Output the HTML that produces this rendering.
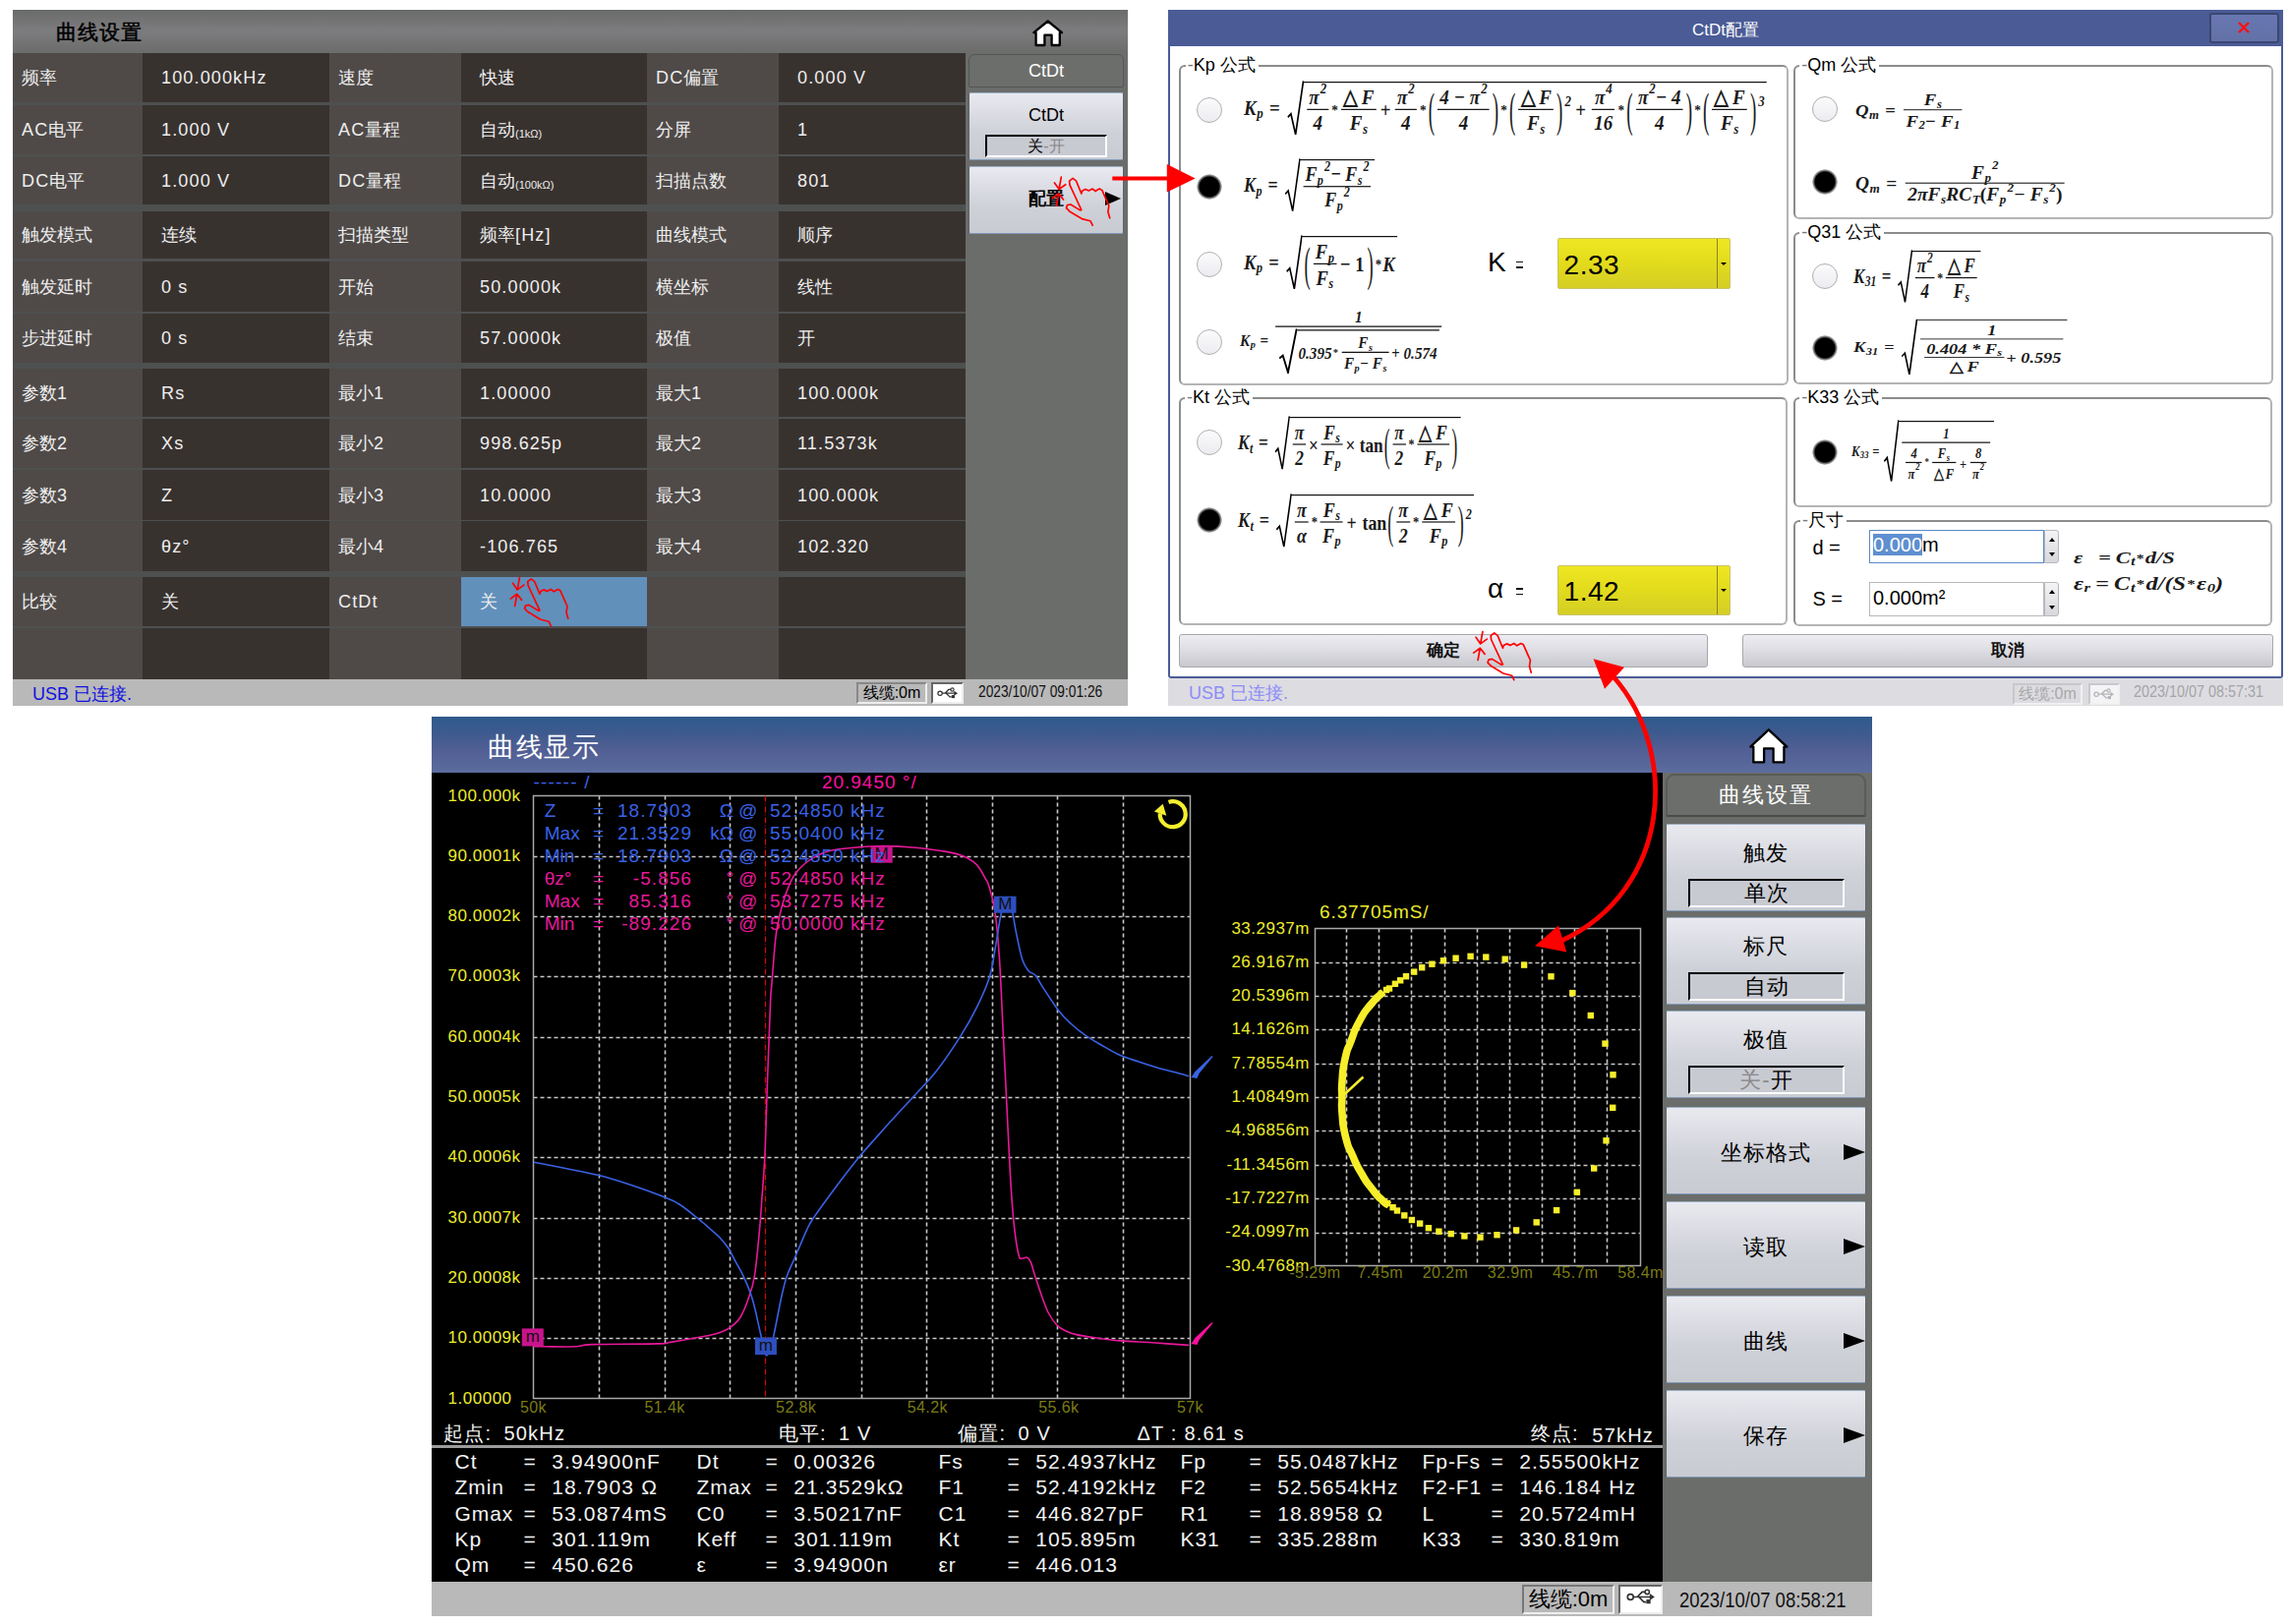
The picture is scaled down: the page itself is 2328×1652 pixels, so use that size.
<!DOCTYPE html>
<html><head><meta charset="utf-8">
<style>
*{margin:0;padding:0;box-sizing:border-box}
html,body{width:2328px;height:1652px;background:#fff;overflow:hidden;font-family:"Liberation Sans",sans-serif}
.abs{position:absolute;white-space:nowrap}
/* Panel A */
#pa{position:absolute;left:13px;top:10px;width:1134px;height:708px;background:#4e5050;overflow:hidden}
#pa .hdr{position:absolute;left:0;top:0;width:1134px;height:44px;background:linear-gradient(#686a69 0%,#727273 20%,#7c7b7d 45%,#7a797b 60%,#6f706f 85%,#6b6d6b 100%)}
#pa .ttl{position:absolute;left:44px;top:9px;font-size:21px;color:#000;letter-spacing:1px;-webkit-text-stroke:0.5px #000}
#pa .lt{letter-spacing:1.15px}
#pa .cell{position:absolute;color:#eee;font-size:18px;line-height:20px;padding-left:9px;display:flex;align-items:center}
#pa .lb{background:#4f4a48}
#pa .vl{background:#38322f;padding-left:19px}
#pa .side{position:absolute;left:969px;top:44px;width:165px;height:637px;background:#6b6d6b}
#pa .stat{position:absolute;left:0;top:681px;width:1134px;height:27px;background:#b9b9b9}
.sbtn{position:absolute;border-radius:2px;background:linear-gradient(#e9e9f0 0%,#dcdde4 30%,#cfd1d8 60%,#c9cbd2 100%);border:1px solid #5e6466;border-top-color:#9ab0c4;border-bottom-color:#7e9ab8;color:#000;text-align:center}
.subbox{position:absolute;border:2px solid #000;border-right-color:#fff;border-bottom-color:#fff;background:#c8cad2;text-align:center}

/* Panel C */
#pc{position:absolute;left:439px;top:729px;width:1465px;height:915px;background:#000;overflow:hidden}
#pc .hdr{position:absolute;left:0;top:0;width:1465px;height:57px;background:linear-gradient(#2f5a8c 0%,#3e5a8e 30%,#525f94 60%,#5b6c9e 100%)}
#pc .side{position:absolute;left:1252px;top:57px;width:213px;height:823px;background:#6b6d6b}
#pc .stat{position:absolute;left:0;top:880px;width:1465px;height:35px;background:#b9b9b9}
.dj{font-family:"Liberation Sans",sans-serif;white-space:nowrap;position:absolute}

/* Panel B */
#pb{position:absolute;left:1188px;top:10px;width:1135px;height:708px;overflow:visible}
#pb .win{position:absolute;left:0;top:0;width:1134px;height:680px;background:#fff;border:2px solid #4a5b96;border-top:0;border-radius:0 0 3px 3px}
#pb .tb{position:absolute;left:0;top:0;width:1134px;height:37px;background:#4a5b96;border-radius:2px 2px 0 0}
#pb .stat{position:absolute;left:0;top:680px;width:1134px;height:28px;background:#dddce1}
.gb{position:absolute;border:2px solid #8c8c8c;border-right-color:#b4b4b4;border-bottom-color:#b4b4b4;border-radius:6px}
.gbt{position:absolute;background:#fff;font-size:18px;color:#000;padding:0 3px 0 2px;line-height:18px;white-space:nowrap}
.rad{position:absolute;width:26px;height:26px;border-radius:50%;border:1.5px solid #b0b0b0;background:linear-gradient(#fbfbfd,#ecebef)}
.radc{position:absolute;width:26px;height:26px;border-radius:50%;background:radial-gradient(circle,#000 0,#000 10px,#555 11px,#bbb 12.5px,#fff 13px)}
.dbtn{position:absolute;border:1px solid #a8a8ac;border-radius:3px;background:linear-gradient(#ececf2 0%,#e2e2e8 35%,#d4d4da 70%,#c8c9ce 100%);font-size:17px;text-align:center;font-weight:bold;color:#111}
.ycb{position:absolute;background:linear-gradient(#efe722 0%,#e2db1c 50%,#d4ce26 100%);border:1px solid #c9c36a;border-radius:2px}
.m{position:absolute;font-family:"Liberation Serif",serif;font-weight:bold;font-style:italic;color:#1a1a1a;white-space:nowrap;display:flex;align-items:center;transform-origin:0 0;line-height:1}
.m .u{font-style:normal}
.fr{display:inline-flex;flex-direction:column;align-items:center;margin:0 2px}
.fr>.n{padding:0 2px 1px 2px;line-height:1;display:flex;align-items:center;justify-content:center}
.fr>.d{border-top:1.5px solid #111;padding:2px 2px 0 2px;line-height:1;align-self:stretch;display:flex;align-items:center;justify-content:center}
.sq{display:inline-flex;align-items:center;border-top:1.6px solid #111;position:relative;margin-left:16px;padding:3px 2px 0 2px}
.sq>svg{position:absolute;left:-15px;top:-2px;width:16px;height:calc(100% + 4px)}
.row{display:inline-flex;align-items:center}
.sb{font-size:0.68em;position:relative;top:0.4em;margin-left:0.5px}
.sp{font-size:0.68em;position:relative;top:-0.6em;margin-left:1px}
.pa{font-style:normal;font-weight:normal;transform:scaleY(2.2);display:inline-block;margin:0 1px}
</style></head>
<body>
<div id="pa">
  <div class="hdr"></div>
  <div class="ttl">曲线设置</div>
  <!-- home icon -->
  <svg class="abs" style="left:1036px;top:9px" width="34" height="30" viewBox="1049 19 34 30"><path d="M1065.7 21.5 L1080 33.2 L1077.8 33.2 L1077.8 46 L1069.6 46 L1069.6 35.7 L1062.4 35.7 L1062.4 46 L1053.6 46 L1053.6 33.2 L1051.4 33.2 Z" fill="#fff" stroke="#000" stroke-width="2.3" stroke-linejoin="round"/></svg>
  <!--PA_GRID-->
<div class="cell lb" style="left:0px;top:44px;width:132px;height:50px">频率</div>
<div class="cell vl" style="left:132px;top:44px;width:190px;height:50px"><span class="lt">100.000kHz</span></div>
<div class="cell lb" style="left:322px;top:44px;width:134px;height:50px">速度</div>
<div class="cell vl" style="left:456px;top:44px;width:189px;height:50px">快速</div>
<div class="cell lb" style="left:645px;top:44px;width:134px;height:50px"><span class="lt">DC</span>偏置</div>
<div class="cell vl" style="left:779px;top:44px;width:190px;height:50px"><span class="lt">0.000 V</span></div>
<div class="cell lb" style="left:0px;top:97px;width:132px;height:50px"><span class="lt">AC</span>电平</div>
<div class="cell vl" style="left:132px;top:97px;width:190px;height:50px"><span class="lt">1.000 V</span></div>
<div class="cell lb" style="left:322px;top:97px;width:134px;height:50px"><span class="lt">AC</span>量程</div>
<div class="cell vl" style="left:456px;top:97px;width:189px;height:50px">自动<span style="font-size:11px;position:relative;top:4px;letter-spacing:0">(1kΩ)</span></div>
<div class="cell lb" style="left:645px;top:97px;width:134px;height:50px">分屏</div>
<div class="cell vl" style="left:779px;top:97px;width:190px;height:50px"><span class="lt">1</span></div>
<div class="cell lb" style="left:0px;top:149px;width:132px;height:49px"><span class="lt">DC</span>电平</div>
<div class="cell vl" style="left:132px;top:149px;width:190px;height:49px"><span class="lt">1.000 V</span></div>
<div class="cell lb" style="left:322px;top:149px;width:134px;height:49px"><span class="lt">DC</span>量程</div>
<div class="cell vl" style="left:456px;top:149px;width:189px;height:49px">自动<span style="font-size:11px;position:relative;top:4px;letter-spacing:0">(100kΩ)</span></div>
<div class="cell lb" style="left:645px;top:149px;width:134px;height:49px">扫描点数</div>
<div class="cell vl" style="left:779px;top:149px;width:190px;height:49px"><span class="lt">801</span></div>
<div class="cell lb" style="left:0px;top:205px;width:132px;height:48px">触发模式</div>
<div class="cell vl" style="left:132px;top:205px;width:190px;height:48px">连续</div>
<div class="cell lb" style="left:322px;top:205px;width:134px;height:48px">扫描类型</div>
<div class="cell vl" style="left:456px;top:205px;width:189px;height:48px">频率<span class="lt">[Hz]</span></div>
<div class="cell lb" style="left:645px;top:205px;width:134px;height:48px">曲线模式</div>
<div class="cell vl" style="left:779px;top:205px;width:190px;height:48px">顺序</div>
<div class="cell lb" style="left:0px;top:256px;width:132px;height:51px">触发延时</div>
<div class="cell vl" style="left:132px;top:256px;width:190px;height:51px"><span class="lt">0 s</span></div>
<div class="cell lb" style="left:322px;top:256px;width:134px;height:51px">开始</div>
<div class="cell vl" style="left:456px;top:256px;width:189px;height:51px"><span class="lt">50.0000k</span></div>
<div class="cell lb" style="left:645px;top:256px;width:134px;height:51px">横坐标</div>
<div class="cell vl" style="left:779px;top:256px;width:190px;height:51px">线性</div>
<div class="cell lb" style="left:0px;top:309px;width:132px;height:50px">步进延时</div>
<div class="cell vl" style="left:132px;top:309px;width:190px;height:50px"><span class="lt">0 s</span></div>
<div class="cell lb" style="left:322px;top:309px;width:134px;height:50px">结束</div>
<div class="cell vl" style="left:456px;top:309px;width:189px;height:50px"><span class="lt">57.0000k</span></div>
<div class="cell lb" style="left:645px;top:309px;width:134px;height:50px">极值</div>
<div class="cell vl" style="left:779px;top:309px;width:190px;height:50px">开</div>
<div class="cell lb" style="left:0px;top:365px;width:132px;height:49px">参数<span class="lt">1</span></div>
<div class="cell vl" style="left:132px;top:365px;width:190px;height:49px"><span class="lt">Rs</span></div>
<div class="cell lb" style="left:322px;top:365px;width:134px;height:49px">最小<span class="lt">1</span></div>
<div class="cell vl" style="left:456px;top:365px;width:189px;height:49px"><span class="lt">1.00000</span></div>
<div class="cell lb" style="left:645px;top:365px;width:134px;height:49px">最大<span class="lt">1</span></div>
<div class="cell vl" style="left:779px;top:365px;width:190px;height:49px"><span class="lt">100.000k</span></div>
<div class="cell lb" style="left:0px;top:416px;width:132px;height:50px">参数<span class="lt">2</span></div>
<div class="cell vl" style="left:132px;top:416px;width:190px;height:50px"><span class="lt">Xs</span></div>
<div class="cell lb" style="left:322px;top:416px;width:134px;height:50px">最小<span class="lt">2</span></div>
<div class="cell vl" style="left:456px;top:416px;width:189px;height:50px"><span class="lt">998.625p</span></div>
<div class="cell lb" style="left:645px;top:416px;width:134px;height:50px">最大<span class="lt">2</span></div>
<div class="cell vl" style="left:779px;top:416px;width:190px;height:50px"><span class="lt">11.5373k</span></div>
<div class="cell lb" style="left:0px;top:468px;width:132px;height:51px">参数<span class="lt">3</span></div>
<div class="cell vl" style="left:132px;top:468px;width:190px;height:51px"><span class="lt">Z</span></div>
<div class="cell lb" style="left:322px;top:468px;width:134px;height:51px">最小<span class="lt">3</span></div>
<div class="cell vl" style="left:456px;top:468px;width:189px;height:51px"><span class="lt">10.0000</span></div>
<div class="cell lb" style="left:645px;top:468px;width:134px;height:51px">最大<span class="lt">3</span></div>
<div class="cell vl" style="left:779px;top:468px;width:190px;height:51px"><span class="lt">100.000k</span></div>
<div class="cell lb" style="left:0px;top:520px;width:132px;height:51px">参数<span class="lt">4</span></div>
<div class="cell vl" style="left:132px;top:520px;width:190px;height:51px"><span class="lt">θz°</span></div>
<div class="cell lb" style="left:322px;top:520px;width:134px;height:51px">最小<span class="lt">4</span></div>
<div class="cell vl" style="left:456px;top:520px;width:189px;height:51px"><span class="lt">-106.765</span></div>
<div class="cell lb" style="left:645px;top:520px;width:134px;height:51px">最大<span class="lt">4</span></div>
<div class="cell vl" style="left:779px;top:520px;width:190px;height:51px"><span class="lt">102.320</span></div>
<div class="cell lb" style="left:0px;top:577px;width:132px;height:50px">比较</div>
<div class="cell vl" style="left:132px;top:577px;width:190px;height:50px">关</div>
<div class="cell lb" style="left:322px;top:577px;width:134px;height:50px"><span class="lt">CtDt</span></div>
<div class="cell vl" style="left:456px;top:577px;width:189px;height:50px;background:#6190bb">关</div>
<div class="cell lb" style="left:645px;top:577px;width:134px;height:50px"></div>
<div class="cell vl" style="left:779px;top:577px;width:190px;height:50px"></div>
<div class="cell lb" style="left:0px;top:629px;width:132px;height:52px"></div>
<div class="cell vl" style="left:132px;top:629px;width:190px;height:52px"></div>
<div class="cell lb" style="left:322px;top:629px;width:134px;height:52px"></div>
<div class="cell vl" style="left:456px;top:629px;width:189px;height:52px"></div>
<div class="cell lb" style="left:645px;top:629px;width:134px;height:52px"></div>
<div class="cell vl" style="left:779px;top:629px;width:190px;height:52px"></div>
<!--/PA_GRID-->
  <div class="side">
    <div class="abs" style="left:3px;top:1px;width:158px;height:34px;background:#6c6e6b;border:1px solid #555;border-radius:6px 6px 2px 2px;color:#fff;font-size:18px;text-align:center;line-height:32px">CtDt</div>
    <div class="sbtn" style="left:3px;top:40px;width:158px;height:69px"><div style="font-size:18px;margin-top:12px">CtDt</div>
      <div class="subbox" style="left:16px;top:42px;width:124px;height:23px;font-size:16px;line-height:19px"><span style="color:#000">关</span><span style="color:#888">-开</span></div></div>
    <div class="sbtn" style="left:3px;top:115px;width:158px;height:69px"><div style="font-size:18px;margin-top:20px;font-weight:bold">配置</div>
      <div class="abs" style="left:138px;top:25px;width:0;height:0;border-left:16px solid #000;border-top:7px solid transparent;border-bottom:7px solid transparent"></div></div>
  </div>
  <div class="stat">
    <div class="abs" style="left:20px;top:3px;color:#1010e0;font-size:18px">USB 已连接.</div>
    <div class="abs" style="left:858px;top:3px;width:72px;height:22px;border:2px solid #888;border-right-color:#eee;border-bottom-color:#eee;font-size:16px;line-height:18px;text-align:center;color:#000">线缆:0m</div>
    <div class="abs" style="left:934px;top:3px;width:33px;height:22px;border:2px solid #666;border-right-color:#eee;border-bottom-color:#eee;background:#fff"></div><svg class="abs" style="left:940px;top:8px" width="22.3" height="12.4" viewBox="0 0 36 20"><g stroke="#333" fill="none" stroke-width="2"><circle cx="5" cy="10" r="3.5"/><path d="M8.5 10H29M13 10L19 4H23M15 10L21 16H24"/></g><path d="M28 6L34 10L28 14Z" fill="#333"/><circle cx="25" cy="4" r="2.6" fill="none" stroke="#333" stroke-width="1.8"/><rect x="24" y="13" width="5" height="5" fill="#333"/></svg>
    <div class="abs" style="left:982px;top:4px;font-size:16px;color:#111;transform:scaleX(0.86);transform-origin:left top">2023/10/07 09:01:26</div>
  </div>
</div>


<div id="pb">
  <div class="win"></div>
  <div class="tb"></div>
  <div class="abs" style="left:0;top:9px;width:1134px;text-align:center;color:#fff;font-size:17px">CtDt配置</div>
  <div class="abs" style="left:1059px;top:3px;width:71px;height:31px;background:linear-gradient(#6877b2,#6271a6);border:2px solid #3a4770;border-radius:3px"></div>
  <svg class="abs" style="left:1087px;top:11px" width="14" height="14" viewBox="0 0 14 14"><path d="M2 2L12 12M12 2L2 12" stroke="#ff1010" stroke-width="2.4"/></svg>
  <!--PB_BODY-->
<div class="gb" style="left:11.0px;top:56.0px;width:620.0px;height:326.0px"></div>
<div class="gbt" style="left:17.7px;top:47.0px"><span style="color:#777">-</span>Kp 公式</div>
<div class="gb" style="left:636.0px;top:56.0px;width:488.0px;height:157.0px"></div>
<div class="gbt" style="left:642.2px;top:47.0px"><span style="color:#777">-</span>Qm 公式</div>
<div class="gb" style="left:636.0px;top:225.5px;width:488.0px;height:155.5px"></div>
<div class="gbt" style="left:642.2px;top:216.5px"><span style="color:#777">-</span>Q31 公式</div>
<div class="gb" style="left:11.0px;top:394.0px;width:619.0px;height:232.0px"></div>
<div class="gbt" style="left:17.1px;top:385.0px"><span style="color:#777">-</span>Kt 公式</div>
<div class="gb" style="left:636.0px;top:394.0px;width:487.0px;height:112.0px"></div>
<div class="gbt" style="left:642.3px;top:385.0px"><span style="color:#777">-</span>K33 公式</div>
<div class="gb" style="left:636.0px;top:519.0px;width:487.0px;height:108.0px"></div>
<div class="gbt" style="left:643.0px;top:510.0px"><span style="color:#777">-</span>尺寸</div>
<div class="rad" style="left:29.0px;top:88.6px"></div>
<div class="radc" style="left:29.0px;top:167.2px"></div>
<div class="rad" style="left:29.0px;top:245.7px"></div>
<div class="rad" style="left:29.0px;top:325.0px"></div>
<div class="rad" style="left:654.9px;top:88.3px"></div>
<div class="radc" style="left:654.9px;top:161.7px"></div>
<div class="rad" style="left:654.9px;top:257.8px"></div>
<div class="radc" style="left:654.9px;top:331.0px"></div>
<div class="rad" style="left:29.0px;top:426.9px"></div>
<div class="radc" style="left:29.0px;top:506.0px"></div>
<div class="radc" style="left:654.9px;top:437.2px"></div>
<div class="dbtn" style="left:10.5px;top:635.4px;width:538.5px;height:34px;line-height:32px">确定</div>
<div class="dbtn" style="left:584px;top:635.4px;width:539.5px;height:34px;line-height:32px">取消</div>
<div class="ycb" style="left:395.5999999999999px;top:232.4px;width:176.4px;height:51.5px"><div class="abs" style="left:6px;top:10.7px;font-size:28px;color:#000;letter-spacing:0.5px">2.33</div><div class="abs" style="left:161px;top:0;width:1px;height:100%;background:#8a8420"></div><div class="abs" style="left:165px;top:23.7px;width:0;height:0;border-top:3px solid #000;border-left:3px solid transparent;border-right:3px solid transparent"></div></div>
<div class="abs" style="left:325px;top:241.1px;font-size:28px;color:#000">K</div><div class="abs" style="left:353.5999999999999px;top:255.6px;width:7px;height:1.8px;background:#111"></div><div class="abs" style="left:353.5999999999999px;top:261.3px;width:7px;height:1.8px;background:#111"></div>
<div class="ycb" style="left:395.5999999999999px;top:564.5px;width:176.4px;height:51.5px"><div class="abs" style="left:6px;top:10.8px;font-size:28px;color:#000;letter-spacing:0.5px">1.42</div><div class="abs" style="left:161px;top:0;width:1px;height:100%;background:#8a8420"></div><div class="abs" style="left:165px;top:23.8px;width:0;height:0;border-top:3px solid #000;border-left:3px solid transparent;border-right:3px solid transparent"></div></div>
<div class="abs" style="left:325px;top:573.2px;font-size:28px;color:#000">α</div><div class="abs" style="left:353.5999999999999px;top:587.8px;width:7px;height:1.8px;background:#111"></div><div class="abs" style="left:353.5999999999999px;top:593.5px;width:7px;height:1.8px;background:#111"></div>
<div class="abs" style="left:655.4000000000001px;top:536px;font-size:20px;color:#000">d =</div>
<div class="abs" style="left:655.4000000000001px;top:588px;font-size:20px;color:#000">S =</div>
<div class="abs" style="left:713px;top:529.2px;width:178px;height:33.5px;border:1.5px solid #5a8ac8;background:#fff;font-size:20px;line-height:29.5px;padding-left:3px;color:#000"><span style="background:#5f8fcf;color:#fff">0.000</span>m</div>
<div class="abs" style="left:891px;top:529.2px;width:15px;height:33.5px;border:1px solid #b8b8bc;border-radius:0 3px 3px 0;background:linear-gradient(#f4f4f6,#d8d8dc)"><div class="abs" style="left:3.5px;top:7px;border-bottom:4px solid #000;border-left:3.5px solid transparent;border-right:3.5px solid transparent"></div><div class="abs" style="left:3.5px;top:21.5px;border-top:4px solid #000;border-left:3.5px solid transparent;border-right:3.5px solid transparent"></div></div>
<div class="abs" style="left:713px;top:581.9px;width:178px;height:34.7px;border:1.5px solid #b8b8bc;background:#fff;font-size:20px;line-height:30.7px;padding-left:3px;color:#000">0.000m²</div>
<div class="abs" style="left:891px;top:581.9px;width:15px;height:34.7px;border:1px solid #b8b8bc;border-radius:0 3px 3px 0;background:linear-gradient(#f4f4f6,#d8d8dc)"><div class="abs" style="left:3.5px;top:7px;border-bottom:4px solid #000;border-left:3.5px solid transparent;border-right:3.5px solid transparent"></div><div class="abs" style="left:3.5px;top:22.7px;border-top:4px solid #000;border-left:3.5px solid transparent;border-right:3.5px solid transparent"></div></div>
<!--FORMULAS-->
<div class="m" id="f_kp1" style="left:77.30px;top:73.07px;font-size:18px;transform:scale(1.0530,1.2066)">K<span class="sb">p</span><span class="u" style="margin:0 6px">=</span><span class="sq"><svg viewBox="0 0 16 100" preserveAspectRatio="none"><path d="M0.5 66 L3.5 60 L8 97 L15.5 1" stroke="#000" stroke-width="1.6" fill="none" vector-effect="non-scaling-stroke"/></svg><span class="fr "><span class="n">π<span class="sp">2</span></span><span class="d">4</span></span><span class="u" style="margin:0 1px;font-size:0.7em">*</span><span class="fr "><span class="n"><span class="u">△</span>&thinsp;F</span><span class="d">F<span class="sb">s</span></span></span><span class="u" style="margin:0 2px">+</span><span class="fr "><span class="n">π<span class="sp">2</span></span><span class="d">4</span></span><span class="u" style="margin:0 1px;font-size:0.7em">*</span><span class="pa" style="transform:scaleY(2.2)">(</span><span class="fr "><span class="n">4 − π<span class="sp">2</span></span><span class="d">4</span></span><span class="pa" style="transform:scaleY(2.2)">)</span><span class="u" style="margin:0 1px;font-size:0.7em">*</span><span class="pa" style="transform:scaleY(2.2)">(</span><span class="fr "><span class="n"><span class="u">△</span>&thinsp;F</span><span class="d">F<span class="sb">s</span></span></span><span class="pa" style="transform:scaleY(2.2)">)</span><span class="sp">2</span><span class="u" style="margin:0 4px">+</span><span class="fr "><span class="n">π<span class="sp">4</span></span><span class="d">16</span></span><span class="u" style="margin:0 1px;font-size:0.7em">*</span><span class="pa" style="transform:scaleY(2.2)">(</span><span class="fr "><span class="n">π<span class="sp">2</span> − 4</span><span class="d">4</span></span><span class="pa" style="transform:scaleY(2.2)">)</span><span class="u" style="margin:0 1px;font-size:0.7em">*</span><span class="pa" style="transform:scaleY(2.2)">(</span><span class="fr "><span class="n"><span class="u">△</span>&thinsp;F</span><span class="d">F<span class="sb">s</span></span></span><span class="pa" style="transform:scaleY(2.2)">)</span><span class="sp">3</span></span></div>
<div class="m" id="f_kp2" style="left:77.30px;top:151.53px;font-size:18px;transform:scale(0.9927,1.1797)">K<span class="sb">p</span><span class="u" style="margin:0 6px">=</span><span class="sq"><svg viewBox="0 0 16 100" preserveAspectRatio="none"><path d="M0.5 66 L3.5 60 L8 97 L15.5 1" stroke="#000" stroke-width="1.6" fill="none" vector-effect="non-scaling-stroke"/></svg><span class="fr "><span class="n">F<span class="sb">p</span><span class="sp">2</span> − F<span class="sb">s</span><span class="sp">2</span></span><span class="d">F<span class="sb">p</span><span class="sp">2</span></span></span></span></div>
<div class="m" id="f_kp3" style="left:77.30px;top:230.11px;font-size:18px;transform:scale(1.0269,1.2080)">K<span class="sb">p</span><span class="u" style="margin:0 6px">=</span><span class="sq"><svg viewBox="0 0 16 100" preserveAspectRatio="none"><path d="M0.5 66 L3.5 60 L8 97 L15.5 1" stroke="#000" stroke-width="1.6" fill="none" vector-effect="non-scaling-stroke"/></svg><span class="pa" style="transform:scaleY(2.2)">(</span><span class="fr "><span class="n">F<span class="sb">p</span></span><span class="d">F<span class="sb">s</span></span></span><span class="u" style="margin:0 2px">− 1</span><span class="pa" style="transform:scaleY(2.2)">)</span><span class="u" style="margin:0 1px;font-size:0.7em">*</span>K</span></div>
<div class="m" id="f_kp4" style="left:73.30px;top:304.25px;font-size:13px;transform:scale(1.1660,1.2500)">K<span class="sb">p</span><span class="u" style="margin:0 4px">=</span><span class="fr big"><span class="n">1</span><span class="d"><span class="sq"><svg viewBox="0 0 16 100" preserveAspectRatio="none"><path d="M0.5 66 L3.5 60 L8 97 L15.5 1" stroke="#000" stroke-width="1.6" fill="none" vector-effect="non-scaling-stroke"/></svg>0.395<span class="u" style="margin:0 1px;font-size:0.7em">*</span><span class="fr "><span class="n">F<span class="sb">s</span></span><span class="d">F<span class="sb">p</span> − F<span class="sb">s</span></span></span> + 0.574</span></span></span></div>
<div class="m" id="f_qm1" style="left:699.10px;top:82.96px;font-size:18px;transform:scale(1.0425,0.9597)">Q<span class="sb">m</span><span class="u" style="margin:0 6px">=</span><span class="fr "><span class="n">F<span class="sb">s</span></span><span class="d">F<span class="sb">2</span> − F<span class="sb">1</span></span></span></div>
<div class="m" id="f_qm2" style="left:699.10px;top:155.67px;font-size:18px;transform:scale(1.0793,1.0366)">Q<span class="sb">m</span><span class="u" style="margin:0 6px">=</span><span class="fr "><span class="n">F<span class="sb">p</span><span class="sp">2</span></span><span class="d">2πF<span class="sb">s</span>RC<span class="sb">T</span><span class="u">(</span>F<span class="sb">p</span><span class="sp">2</span> − F<span class="sb">s</span><span class="sp">2</span><span class="u">)</span></span></span></div>
<div class="m" id="f_k31a" style="left:696.70px;top:245.42px;font-size:18px;transform:scale(0.9378,1.1734)">K<span class="sb">31</span><span class="u" style="margin:0 6px">=</span><span class="sq"><svg viewBox="0 0 16 100" preserveAspectRatio="none"><path d="M0.5 66 L3.5 60 L8 97 L15.5 1" stroke="#000" stroke-width="1.6" fill="none" vector-effect="non-scaling-stroke"/></svg><span class="fr "><span class="n">π<span class="sp">2</span></span><span class="d">4</span></span><span class="u" style="margin:0 1px;font-size:0.7em">*</span><span class="fr "><span class="n"><span class="u">△</span>&thinsp;F</span><span class="d">F<span class="sb">s</span></span></span></span></div>
<div class="m" id="f_k31b" style="left:696.70px;top:315.45px;font-size:18px;transform:scale(1.0161,0.8464)">K<span class="sb">31</span><span class="u" style="margin:0 6px">=</span><span class="sq"><svg viewBox="0 0 16 100" preserveAspectRatio="none"><path d="M0.5 66 L3.5 60 L8 97 L15.5 1" stroke="#000" stroke-width="1.6" fill="none" vector-effect="non-scaling-stroke"/></svg><span class="fr "><span class="n">1</span><span class="d"><span class="fr "><span class="n">0.404 * F<span class="sb">s</span></span><span class="d"><span class="u">△</span>&thinsp;F</span></span> + 0.595</span></span></span></div>
<div class="m" id="f_kt1" style="left:70.50px;top:414.49px;font-size:18px;transform:scale(0.9604,1.1912)">K<span class="sb">t</span><span class="u" style="margin:0 6px">=</span><span class="sq"><svg viewBox="0 0 16 100" preserveAspectRatio="none"><path d="M0.5 66 L3.5 60 L8 97 L15.5 1" stroke="#000" stroke-width="1.6" fill="none" vector-effect="non-scaling-stroke"/></svg><span class="fr "><span class="n">π</span><span class="d">2</span></span><span class="u" style="margin:0 1px">×</span><span class="fr "><span class="n">F<span class="sb">s</span></span><span class="d">F<span class="sb">p</span></span></span><span class="u" style="margin:0 1px">×</span><span class="u">&thinsp;tan</span><span class="pa" style="transform:scaleY(2.2)">(</span><span class="fr "><span class="n">π</span><span class="d">2</span></span><span class="u" style="margin:0 1px;font-size:0.7em">*</span><span class="fr "><span class="n"><span class="u">△</span>&thinsp;F</span><span class="d">F<span class="sb">p</span></span></span><span class="pa" style="transform:scaleY(2.2)">)</span></span></div>
<div class="m" id="f_kt2" style="left:70.50px;top:493.09px;font-size:18px;transform:scale(0.9957,1.1912)">K<span class="sb">t</span><span class="u" style="margin:0 6px">=</span><span class="sq"><svg viewBox="0 0 16 100" preserveAspectRatio="none"><path d="M0.5 66 L3.5 60 L8 97 L15.5 1" stroke="#000" stroke-width="1.6" fill="none" vector-effect="non-scaling-stroke"/></svg><span class="fr "><span class="n">π</span><span class="d">α</span></span><span class="u" style="margin:0 1px;font-size:0.7em">*</span><span class="fr "><span class="n">F<span class="sb">s</span></span><span class="d">F<span class="sb">p</span></span></span><span class="u" style="margin:0 2px">+</span><span class="u">&thinsp;tan</span><span class="pa" style="transform:scaleY(2.2)">(</span><span class="fr "><span class="n">π</span><span class="d">2</span></span><span class="u" style="margin:0 1px;font-size:0.7em">*</span><span class="fr "><span class="n"><span class="u">△</span>&thinsp;F</span><span class="d">F<span class="sb">p</span></span></span><span class="pa" style="transform:scaleY(2.2)">)</span><span class="sp">2</span></span></div>
<div class="m" id="f_k33" style="left:695.00px;top:417.90px;font-size:13px;transform:scale(0.9670,1.1963)">K<span class="sb">33</span><span class="u" style="margin:0 4px">=</span><span class="sq"><svg viewBox="0 0 16 100" preserveAspectRatio="none"><path d="M0.5 66 L3.5 60 L8 97 L15.5 1" stroke="#000" stroke-width="1.6" fill="none" vector-effect="non-scaling-stroke"/></svg><span class="fr "><span class="n">1</span><span class="d"><span class="fr "><span class="n">4</span><span class="d">π<span class="sp">2</span></span></span><span class="u" style="margin:0 1px;font-size:0.7em">*</span><span class="fr "><span class="n">F<span class="sb">s</span></span><span class="d"><span class="u">△</span>&thinsp;F</span></span><span class="u" style="margin:0 2px">+</span><span class="fr "><span class="n">8</span><span class="d">π<span class="sp">2</span></span></span></span></span></span></div>
<div class="m" id="f_eps1" style="left:921.20px;top:548.90px;font-size:19px;transform:scale(1.1827,0.9014)">ε&nbsp;&nbsp;<span class="u" style="margin:0 4px">=</span>C<span class="sb">t</span><span class="u" style="margin:0 1px;font-size:0.7em">*</span>d/S</div>
<div class="m" id="f_eps2" style="left:921.20px;top:573.99px;font-size:19px;transform:scale(1.2771,0.9915)">ε<span class="sb">r</span><span class="u" style="margin:0 4px">=</span>C<span class="sb">t</span><span class="u" style="margin:0 1px;font-size:0.7em">*</span>d/(S<span class="u" style="margin:0 1px;font-size:0.7em">*</span>ε<span class="sb">0</span>)</div>
<!--/FORMULAS-->
<!--/PB_BODY-->
  <div class="stat">
    <div class="abs" style="left:21px;top:3px;color:#8c8cf8;font-size:18px">USB 已连接.</div>
    <div class="abs" style="left:859px;top:5px;width:71px;height:22px;border:2px solid #c8c8cc;border-right-color:#f0f0f0;border-bottom-color:#f0f0f0;font-size:16px;line-height:18px;text-align:center;color:#a8a8a8">线缆:0m</div>
    <div class="abs" style="left:936px;top:5px;width:32px;height:22px;border:2px solid #c8c8cc;border-right-color:#f0f0f0;border-bottom-color:#f0f0f0;background:#f4f4f6"></div><svg class="abs" style="left:941px;top:10px" width="22.3" height="12.4" viewBox="0 0 36 20"><g stroke="#b4b4b8" fill="none" stroke-width="2"><circle cx="5" cy="10" r="3.5"/><path d="M8.5 10H29M13 10L19 4H23M15 10L21 16H24"/></g><path d="M28 6L34 10L28 14Z" fill="#b4b4b8"/><circle cx="25" cy="4" r="2.6" fill="none" stroke="#b4b4b8" stroke-width="1.8"/><rect x="24" y="13" width="5" height="5" fill="#b4b4b8"/></svg>
    <div class="abs" style="left:982px;top:5px;font-size:16px;color:#a4a4a8;transform:scaleX(0.9);transform-origin:left top">2023/10/07 08:57:31</div>
  </div>
</div>
<div id="pc">
  <div class="hdr"></div>
  <div class="abs" style="left:57px;top:13px;font-size:27px;color:#fff;letter-spacing:1.5px">曲线显示</div>
  <svg class="abs" style="left:1339px;top:11px" width="42" height="38" viewBox="1778 740 42 38"><path d="M1798.8 742.3 L1817.3 759.6 L1814.4 759.6 L1814.4 775.4 L1803.6 775.4 L1803.6 761.3 L1794.1 761.3 L1794.1 775.4 L1783.3 775.4 L1783.3 759.6 L1780.3 759.6 Z" fill="#fff" stroke="#000" stroke-width="2.3" stroke-linejoin="round"/></svg>
  <!--PC_CHART-->
<svg class="abs" style="left:0;top:0" width="1252" height="880" viewBox="0 0 1252 880">
<path d="M170.5 80.5V693.5 M103.5 142.5H771.5 M237.5 80.5V693.5 M103.5 203.5H771.5 M303.5 80.5V693.5 M103.5 264.5H771.5 M370.5 80.5V693.5 M103.5 326.5H771.5 M437.5 80.5V693.5 M103.5 387.5H771.5 M503.5 80.5V693.5 M103.5 448.5H771.5 M570.5 80.5V693.5 M103.5 510.5H771.5 M636.5 80.5V693.5 M103.5 571.5H771.5 M703.5 80.5V693.5 M103.5 632.5H771.5" stroke="#c8c8c8" stroke-width="1.6" stroke-dasharray="4 3" fill="none"/>
<rect x="103.5" y="80.5" width="668.0" height="613.0" fill="none" stroke="#a8a8a8" stroke-width="1.5"/>
<path d="M339.5 80.5V693.5" stroke="#e00000" stroke-width="1.2" stroke-dasharray="6 2 1 2" fill="none"/>
<path d="M103.5 640.5 C105.3 640.5 107.1 640.8 114.3 640.8 C121.5 640.8 138.7 641.2 146.8 640.8 C154.9 640.4 149.3 639.1 163.1 638.6 C176.9 638.1 216.2 638.3 229.5 637.9 C242.8 637.5 236.4 637.4 242.8 636.4 C249.2 635.4 260.6 633.4 268.0 632.0 C275.4 630.6 281.5 629.9 287.2 628.3 C292.9 626.7 297.6 625.1 302.0 622.3 C306.4 619.5 310.4 616.6 313.8 611.3 C317.2 606.0 320.2 597.7 322.6 590.6 C325.1 583.4 326.6 580.2 328.5 568.4 C330.4 556.6 332.5 532.8 333.7 519.7 C334.9 506.7 335.0 502.4 335.9 490.1 C336.8 477.8 338.1 462.7 338.9 445.8 C339.7 428.8 340.5 400.9 340.9 388.4 C341.3 375.9 340.9 387.4 341.5 371.0 C342.1 354.6 343.9 306.5 344.6 289.8 C345.4 273.1 345.2 281.4 346.0 271.0 C346.8 260.6 348.6 237.5 349.6 227.5 C350.6 217.5 350.9 217.2 352.1 211.0 C353.3 204.8 355.2 196.5 357.0 190.2 C358.8 183.9 360.9 178.0 363.0 173.0 C365.1 168.0 366.8 164.1 369.5 160.3 C372.2 156.5 375.7 152.9 379.0 150.0 C382.3 147.1 385.4 145.1 389.4 142.9 C393.4 140.7 398.0 138.4 403.0 137.0 C408.0 135.6 411.2 135.1 419.3 134.2 C427.4 133.3 440.1 131.9 451.7 131.7 C463.3 131.5 476.6 132.0 489.0 133.0 C501.4 134.0 517.7 136.4 526.4 137.9 C535.1 139.4 536.9 140.3 541.0 142.0 C545.1 143.7 548.6 145.9 551.3 147.9 C554.0 149.9 555.0 151.1 557.0 154.0 C559.0 156.9 562.0 162.5 563.5 165.3 C565.0 168.1 564.8 165.9 566.3 171.0 C567.8 176.1 570.6 183.3 572.5 195.6 C574.4 207.9 576.0 224.4 577.4 244.9 C578.8 265.4 579.9 294.1 581.1 318.7 C582.3 343.3 583.6 368.0 584.8 392.6 C586.0 417.2 587.3 446.0 588.5 466.5 C589.7 487.0 590.8 502.2 592.2 515.7 C593.6 529.2 595.6 541.9 597.1 547.8 C598.6 553.7 599.6 550.6 601.0 551.0 C602.4 551.4 604.3 549.5 605.7 550.2 C607.1 550.9 608.0 551.6 609.4 555.1 C610.8 558.5 612.4 565.1 614.3 570.9 C616.2 576.7 618.6 584.1 620.7 590.0 C622.8 595.9 624.5 601.2 627.0 606.0 C629.5 610.8 632.7 615.5 635.7 618.7 C638.7 621.9 641.7 623.4 645.0 625.0 C648.3 626.6 650.4 627.4 655.6 628.6 C660.8 629.8 668.5 630.9 676.0 632.0 C683.5 633.1 690.4 634.1 700.4 634.9 C710.4 635.7 724.4 636.2 736.0 637.0 C747.6 637.8 764.4 639.0 770.1 639.4" stroke="#e8189a" stroke-width="1.6" fill="none" stroke-linejoin="round"/>
<path d="M104.0 453.2 C109.3 454.3 125.0 457.3 136.0 459.5 C147.0 461.7 158.5 463.7 169.7 466.5 C180.9 469.3 191.9 472.8 203.0 476.5 C214.1 480.2 228.1 485.3 236.2 488.6 C244.3 491.8 246.2 492.6 251.7 496.0 C257.2 499.4 265.0 505.8 269.4 509.3 C273.8 512.8 275.7 514.5 278.3 516.7 C280.9 518.9 282.5 520.4 285.0 522.6 C287.5 524.8 290.3 526.9 293.1 530.0 C295.9 533.1 299.5 537.3 302.0 541.0 C304.5 544.7 305.4 547.6 307.9 552.2 C310.3 556.8 314.0 562.8 316.7 568.4 C319.4 574.1 322.1 580.3 324.1 586.1 C326.2 591.9 327.3 596.1 329.0 603.0 C330.7 609.9 332.6 619.7 334.5 627.5 C336.4 635.3 338.3 648.7 340.4 649.7 C342.5 650.7 344.6 642.8 347.0 633.4 C349.4 624.0 352.8 604.1 355.1 593.5 C357.4 582.9 358.5 577.3 361.0 569.9 C363.5 562.5 366.6 557.0 369.9 549.2 C373.2 541.4 378.0 529.7 381.0 523.3 C384.0 516.9 383.0 518.0 387.8 510.8 C392.6 503.6 402.0 490.7 410.0 480.0 C418.0 469.3 426.8 457.7 435.8 446.8 C444.8 435.9 454.9 425.1 464.1 414.8 C473.3 404.5 483.0 394.2 491.2 385.2 C499.4 376.2 505.6 370.6 513.4 360.6 C521.2 350.5 531.0 336.0 538.0 324.9 C545.0 313.8 550.3 304.2 555.2 294.1 C560.1 284.1 564.4 274.9 567.5 264.6 C570.6 254.4 571.9 242.9 573.7 232.6 C575.6 222.3 577.2 210.0 578.6 203.0 C580.0 196.0 581.1 193.2 582.3 190.7 C583.5 188.2 584.8 187.6 586.0 188.0 C587.2 188.4 588.3 187.8 589.7 193.2 C591.1 198.6 592.7 211.2 594.6 220.2 C596.4 229.2 598.7 240.9 600.8 247.3 C602.9 253.7 604.7 255.7 606.9 258.4 C609.2 261.1 611.9 260.6 614.3 263.3 C616.6 266.0 617.0 268.3 621.0 274.4 C625.0 280.5 633.2 293.4 638.2 299.8 C643.2 306.2 646.5 308.8 651.0 313.0 C655.5 317.2 660.5 321.2 665.5 324.7 C670.5 328.2 675.2 330.7 681.0 334.0 C686.8 337.3 694.1 341.8 700.4 344.6 C706.7 347.4 712.8 348.9 719.0 351.0 C725.2 353.1 731.8 355.2 737.8 357.0 C743.8 358.8 749.6 360.1 755.0 361.5 C760.4 362.9 767.6 365.0 770.1 365.7" stroke="#3a62e6" stroke-width="1.6" fill="none" stroke-linejoin="round"/>
<path d="M772.5 367.0 L776.5 361.0 L793.5 345.0 L794.5 346.0 L780.5 363.0 L778.5 368.0 Z" fill="#3a62e6"/>
<path d="M772.5 638.0 L776.5 632.0 L793.5 616.0 L794.5 617.0 L780.5 634.0 L778.5 639.0 Z" fill="#ff10a0"/>
<rect x="446.70000000000005" y="131.70000000000005" width="22" height="17" fill="#c8148c"/><text x="457.70000000000005" y="144.70000000000005" font-size="17" fill="#111" text-anchor="middle" font-family="Liberation Sans">M</text>
<rect x="572" y="182.70000000000005" width="22.5" height="17" fill="#2e4fc0"/><text x="583.25" y="195.70000000000005" font-size="17" fill="#111" text-anchor="middle" font-family="Liberation Sans">M</text>
<rect x="328.9" y="631.5999999999999" width="22" height="17.5" fill="#2e4fc0"/><text x="339.9" y="645.0999999999999" font-size="17" fill="#111" text-anchor="middle" font-family="Liberation Sans">m</text>
<rect x="91.79999999999995" y="622.4000000000001" width="22" height="18" fill="#c8148c"/><text x="102.79999999999995" y="636.4000000000001" font-size="17" fill="#111" text-anchor="middle" font-family="Liberation Sans">m</text>
<path d="M749.5 86.89999999999998 A13 13 0 1 1 740.75 98.29999999999995" stroke="#f4ee2e" stroke-width="4.2" fill="none"/>
<path d="M734.9000000000001 96.5 L743.7 88.70000000000005 L747.3 100.79999999999995 Z" fill="#f4ee2e"/>
<path d="M930.5 215.5V558.5 M898.5 250.5H1229.5 M963.5 215.5V558.5 M898.5 284.5H1229.5 M996.5 215.5V558.5 M898.5 318.5H1229.5 M1030.5 215.5V558.5 M898.5 353.5H1229.5 M1063.5 215.5V558.5 M898.5 387.5H1229.5 M1096.5 215.5V558.5 M898.5 421.5H1229.5 M1129.5 215.5V558.5 M898.5 456.5H1229.5 M1162.5 215.5V558.5 M898.5 490.5H1229.5 M1195.5 215.5V558.5 M898.5 525.5H1229.5" stroke="#c8c8c8" stroke-width="1.6" stroke-dasharray="4 3" fill="none"/>
<rect x="898.5" y="215.5" width="331.0" height="343.0" fill="none" stroke="#a8a8a8" stroke-width="1.5"/>
<path d="M968.0 280.0 C963.7 284.3 963.2 283.0 955.0 293.0 C946.8 303.0 950.2 297.7 943.5 310.0 C936.8 322.3 939.8 317.3 935.0 330.0 C930.2 342.7 932.0 334.3 929.0 348.0 C926.0 361.7 927.0 358.0 926.0 371.0 C925.0 384.0 925.9 375.9 925.9 387.0 C925.9 398.1 924.9 390.8 926.1 404.4 C927.3 418.0 926.1 413.8 929.6 427.8 C933.1 441.8 931.1 434.0 936.6 446.5 C942.1 459.0 939.4 453.9 946.0 465.2 C952.6 476.5 949.5 471.5 956.5 480.5 C963.5 489.5 961.2 486.7 967.0 492.2 C972.8 497.7 971.7 495.4 974.0 497.0" stroke="#f6ee2a" stroke-width="7.6" fill="none" stroke-linejoin="round"/>
<rect x="967.8" y="274.8" width="6.4" height="6.4" fill="#f6ee2a"/>
<rect x="970.8" y="273.3" width="6.4" height="6.4" fill="#f6ee2a"/>
<rect x="976.7" y="268.6" width="6.4" height="6.4" fill="#f6ee2a"/>
<rect x="982.0" y="265.1" width="6.4" height="6.4" fill="#f6ee2a"/>
<rect x="987.8" y="261.0" width="6.4" height="6.4" fill="#f6ee2a"/>
<rect x="996.0" y="256.4" width="6.4" height="6.4" fill="#f6ee2a"/>
<rect x="1004.0" y="252.0" width="6.4" height="6.4" fill="#f6ee2a"/>
<rect x="1014.2" y="248.5" width="6.4" height="6.4" fill="#f6ee2a"/>
<rect x="1025.8" y="245.0" width="6.4" height="6.4" fill="#f6ee2a"/>
<rect x="1038.4" y="242.5" width="6.4" height="6.4" fill="#f6ee2a"/>
<rect x="1053.4" y="240.6" width="6.4" height="6.4" fill="#f6ee2a"/>
<rect x="1069.1" y="241.4" width="6.4" height="6.4" fill="#f6ee2a"/>
<rect x="1088.5" y="243.5" width="6.4" height="6.4" fill="#f6ee2a"/>
<rect x="1107.9" y="249.4" width="6.4" height="6.4" fill="#f6ee2a"/>
<rect x="1135.3" y="261.1" width="6.4" height="6.4" fill="#f6ee2a"/>
<rect x="1157.1" y="277.9" width="6.4" height="6.4" fill="#f6ee2a"/>
<rect x="1175.6" y="300.8" width="6.4" height="6.4" fill="#f6ee2a"/>
<rect x="1190.3" y="329.4" width="6.4" height="6.4" fill="#f6ee2a"/>
<rect x="1198.3" y="361.1" width="6.4" height="6.4" fill="#f6ee2a"/>
<rect x="1198.0" y="394.6" width="6.4" height="6.4" fill="#f6ee2a"/>
<rect x="1191.3" y="428.1" width="6.4" height="6.4" fill="#f6ee2a"/>
<rect x="1179.0" y="456.3" width="6.4" height="6.4" fill="#f6ee2a"/>
<rect x="1161.7" y="480.6" width="6.4" height="6.4" fill="#f6ee2a"/>
<rect x="1140.9" y="498.9" width="6.4" height="6.4" fill="#f6ee2a"/>
<rect x="1120.5" y="511.2" width="6.4" height="6.4" fill="#f6ee2a"/>
<rect x="1099.9" y="519.2" width="6.4" height="6.4" fill="#f6ee2a"/>
<rect x="1080.3" y="524.0" width="6.4" height="6.4" fill="#f6ee2a"/>
<rect x="1063.3" y="526.4" width="6.4" height="6.4" fill="#f6ee2a"/>
<rect x="1047.2" y="525.2" width="6.4" height="6.4" fill="#f6ee2a"/>
<rect x="1033.5" y="522.9" width="6.4" height="6.4" fill="#f6ee2a"/>
<rect x="1021.2" y="520.5" width="6.4" height="6.4" fill="#f6ee2a"/>
<rect x="1010.7" y="517.0" width="6.4" height="6.4" fill="#f6ee2a"/>
<rect x="1001.9" y="512.4" width="6.4" height="6.4" fill="#f6ee2a"/>
<rect x="993.7" y="508.8" width="6.4" height="6.4" fill="#f6ee2a"/>
<rect x="986.1" y="504.2" width="6.4" height="6.4" fill="#f6ee2a"/>
<rect x="978.8" y="499.3" width="6.4" height="6.4" fill="#f6ee2a"/>
<rect x="974.4" y="496.0" width="6.4" height="6.4" fill="#f6ee2a"/>
<rect x="968.8" y="491.8" width="6.4" height="6.4" fill="#f6ee2a"/>
<path d="M928.0 384.5 L947.5 366.5" stroke="#f6ee2a" stroke-width="2.5" fill="none"/>
</svg>
<div class="dj" style="left:16.6px;top:70.5px;color:#ecec2c;font-size:17px;letter-spacing:0.5px">100.000k</div>
<div class="dj" style="left:16.6px;top:131.8px;color:#ecec2c;font-size:17px;letter-spacing:0.5px">90.0001k</div>
<div class="dj" style="left:16.6px;top:193.1px;color:#ecec2c;font-size:17px;letter-spacing:0.5px">80.0002k</div>
<div class="dj" style="left:16.6px;top:254.4px;color:#ecec2c;font-size:17px;letter-spacing:0.5px">70.0003k</div>
<div class="dj" style="left:16.6px;top:315.7px;color:#ecec2c;font-size:17px;letter-spacing:0.5px">60.0004k</div>
<div class="dj" style="left:16.6px;top:377.0px;color:#ecec2c;font-size:17px;letter-spacing:0.5px">50.0005k</div>
<div class="dj" style="left:16.6px;top:438.3px;color:#ecec2c;font-size:17px;letter-spacing:0.5px">40.0006k</div>
<div class="dj" style="left:16.6px;top:499.6px;color:#ecec2c;font-size:17px;letter-spacing:0.5px">30.0007k</div>
<div class="dj" style="left:16.6px;top:560.9px;color:#ecec2c;font-size:17px;letter-spacing:0.5px">20.0008k</div>
<div class="dj" style="left:16.6px;top:622.2px;color:#ecec2c;font-size:17px;letter-spacing:0.5px">10.0009k</div>
<div class="dj" style="left:16.6px;top:683.5px;color:#ecec2c;font-size:17px;letter-spacing:0.5px">1.00000</div>
<div class="dj" style="left:53.5px;top:694px;width:100px;text-align:center;color:#7b7b16;font-size:16px;letter-spacing:0.4px">50k</div>
<div class="dj" style="left:187.1px;top:694px;width:100px;text-align:center;color:#7b7b16;font-size:16px;letter-spacing:0.4px">51.4k</div>
<div class="dj" style="left:320.7px;top:694px;width:100px;text-align:center;color:#7b7b16;font-size:16px;letter-spacing:0.4px">52.8k</div>
<div class="dj" style="left:454.3px;top:694px;width:100px;text-align:center;color:#7b7b16;font-size:16px;letter-spacing:0.4px">54.2k</div>
<div class="dj" style="left:587.9px;top:694px;width:100px;text-align:center;color:#7b7b16;font-size:16px;letter-spacing:0.4px">55.6k</div>
<div class="dj" style="left:721.5px;top:694px;width:100px;text-align:center;color:#7b7b16;font-size:16px;letter-spacing:0.4px">57k</div>
<div class="dj" style="left:743.0px;top:205.5px;width:150px;text-align:right;color:#ecec2c;font-size:17px;letter-spacing:0.5px">33.2937m</div>
<div class="dj" style="left:743.0px;top:239.8px;width:150px;text-align:right;color:#ecec2c;font-size:17px;letter-spacing:0.5px">26.9167m</div>
<div class="dj" style="left:743.0px;top:274.1px;width:150px;text-align:right;color:#ecec2c;font-size:17px;letter-spacing:0.5px">20.5396m</div>
<div class="dj" style="left:743.0px;top:308.4px;width:150px;text-align:right;color:#ecec2c;font-size:17px;letter-spacing:0.5px">14.1626m</div>
<div class="dj" style="left:743.0px;top:342.7px;width:150px;text-align:right;color:#ecec2c;font-size:17px;letter-spacing:0.5px">7.78554m</div>
<div class="dj" style="left:743.0px;top:377.0px;width:150px;text-align:right;color:#ecec2c;font-size:17px;letter-spacing:0.5px">1.40849m</div>
<div class="dj" style="left:743.0px;top:411.3px;width:150px;text-align:right;color:#ecec2c;font-size:17px;letter-spacing:0.5px">-4.96856m</div>
<div class="dj" style="left:743.0px;top:445.6px;width:150px;text-align:right;color:#ecec2c;font-size:17px;letter-spacing:0.5px">-11.3456m</div>
<div class="dj" style="left:743.0px;top:479.9px;width:150px;text-align:right;color:#ecec2c;font-size:17px;letter-spacing:0.5px">-17.7227m</div>
<div class="dj" style="left:743.0px;top:514.2px;width:150px;text-align:right;color:#ecec2c;font-size:17px;letter-spacing:0.5px">-24.0997m</div>
<div class="dj" style="left:743.0px;top:548.5px;width:150px;text-align:right;color:#ecec2c;font-size:17px;letter-spacing:0.5px">-30.4768m</div>
<div class="dj" style="left:848.5px;top:557px;width:100px;text-align:center;color:#7b7b16;font-size:16px;letter-spacing:0.4px">-5.29m</div>
<div class="dj" style="left:914.7px;top:557px;width:100px;text-align:center;color:#7b7b16;font-size:16px;letter-spacing:0.4px">7.45m</div>
<div class="dj" style="left:980.9px;top:557px;width:100px;text-align:center;color:#7b7b16;font-size:16px;letter-spacing:0.4px">20.2m</div>
<div class="dj" style="left:1047.1px;top:557px;width:100px;text-align:center;color:#7b7b16;font-size:16px;letter-spacing:0.4px">32.9m</div>
<div class="dj" style="left:1113.3px;top:557px;width:100px;text-align:center;color:#7b7b16;font-size:16px;letter-spacing:0.4px">45.7m</div>
<div class="dj" style="left:1179.5px;top:557px;width:100px;text-align:center;color:#7b7b16;font-size:16px;letter-spacing:0.4px">58.4m</div>
<div class="dj" style="left:903.0px;top:188.0px;color:#ecec2c;font-size:19px;letter-spacing:0.9px">6.37705mS/</div>
<div class="dj" style="left:103.5px;top:56.0px;color:#3a62e6;font-size:19px;letter-spacing:1.2px">------ /</div>
<div class="dj" style="left:396.9px;top:56.0px;color:#ff10a0;font-size:19px;letter-spacing:1.0px">20.9450 °/</div>
<div class="dj" style="left:114.79999999999995px;top:85.3px;color:#3a62e6;font-size:19px">Z</div>
<div class="dj" style="left:164px;top:85.3px;color:#3a62e6;font-size:19px">=</div>
<div class="dj" style="left:65px;top:85.3px;width:200px;text-align:right;color:#3a62e6;font-size:19px;letter-spacing:1.05px">18.7903</div>
<div class="dj" style="left:247px;top:85.3px;width:60px;text-align:right;color:#3a62e6;font-size:19px">Ω</div>
<div class="dj" style="left:312px;top:85.3px;color:#3a62e6;font-size:19px">@</div>
<div class="dj" style="left:344px;top:85.3px;color:#3a62e6;font-size:19px;letter-spacing:1.0px">52.4850 kHz</div>
<div class="dj" style="left:114.79999999999995px;top:108.2px;color:#3a62e6;font-size:19px">Max</div>
<div class="dj" style="left:164px;top:108.2px;color:#3a62e6;font-size:19px">=</div>
<div class="dj" style="left:65px;top:108.2px;width:200px;text-align:right;color:#3a62e6;font-size:19px;letter-spacing:1.05px">21.3529</div>
<div class="dj" style="left:247px;top:108.2px;width:60px;text-align:right;color:#3a62e6;font-size:19px">kΩ</div>
<div class="dj" style="left:312px;top:108.2px;color:#3a62e6;font-size:19px">@</div>
<div class="dj" style="left:344px;top:108.2px;color:#3a62e6;font-size:19px;letter-spacing:1.0px">55.0400 kHz</div>
<div class="dj" style="left:114.79999999999995px;top:131.1px;color:#3a62e6;font-size:19px">Min</div>
<div class="dj" style="left:164px;top:131.1px;color:#3a62e6;font-size:19px">=</div>
<div class="dj" style="left:65px;top:131.1px;width:200px;text-align:right;color:#3a62e6;font-size:19px;letter-spacing:1.05px">18.7903</div>
<div class="dj" style="left:247px;top:131.1px;width:60px;text-align:right;color:#3a62e6;font-size:19px">Ω</div>
<div class="dj" style="left:312px;top:131.1px;color:#3a62e6;font-size:19px">@</div>
<div class="dj" style="left:344px;top:131.1px;color:#3a62e6;font-size:19px;letter-spacing:1.0px">52.4850 kHz</div>
<div class="dj" style="left:114.79999999999995px;top:154.0px;color:#e8189a;font-size:19px">θz°</div>
<div class="dj" style="left:164px;top:154.0px;color:#e8189a;font-size:19px">=</div>
<div class="dj" style="left:65px;top:154.0px;width:200px;text-align:right;color:#e8189a;font-size:19px;letter-spacing:1.05px">-5.856</div>
<div class="dj" style="left:247px;top:154.0px;width:60px;text-align:right;color:#e8189a;font-size:19px">°</div>
<div class="dj" style="left:312px;top:154.0px;color:#e8189a;font-size:19px">@</div>
<div class="dj" style="left:344px;top:154.0px;color:#e8189a;font-size:19px;letter-spacing:1.0px">52.4850 kHz</div>
<div class="dj" style="left:114.79999999999995px;top:176.9px;color:#e8189a;font-size:19px">Max</div>
<div class="dj" style="left:164px;top:176.9px;color:#e8189a;font-size:19px">=</div>
<div class="dj" style="left:65px;top:176.9px;width:200px;text-align:right;color:#e8189a;font-size:19px;letter-spacing:1.05px">85.316</div>
<div class="dj" style="left:247px;top:176.9px;width:60px;text-align:right;color:#e8189a;font-size:19px">°</div>
<div class="dj" style="left:312px;top:176.9px;color:#e8189a;font-size:19px">@</div>
<div class="dj" style="left:344px;top:176.9px;color:#e8189a;font-size:19px;letter-spacing:1.0px">53.7275 kHz</div>
<div class="dj" style="left:114.79999999999995px;top:199.8px;color:#e8189a;font-size:19px">Min</div>
<div class="dj" style="left:164px;top:199.8px;color:#e8189a;font-size:19px">=</div>
<div class="dj" style="left:65px;top:199.8px;width:200px;text-align:right;color:#e8189a;font-size:19px;letter-spacing:1.05px">-89.226</div>
<div class="dj" style="left:247px;top:199.8px;width:60px;text-align:right;color:#e8189a;font-size:19px">°</div>
<div class="dj" style="left:312px;top:199.8px;color:#e8189a;font-size:19px">@</div>
<div class="dj" style="left:344px;top:199.8px;color:#e8189a;font-size:19px;letter-spacing:1.0px">50.0000 kHz</div>
<div class="dj" style="left:12.0px;top:718.0px;color:#f4f4f4;font-size:20px;letter-spacing:1.2px"><span style="position:relative;top:-2px">起点:</span></div>
<div class="dj" style="left:73.4px;top:718.0px;color:#f4f4f4;font-size:20px;letter-spacing:1.2px">50kHz</div>
<div class="dj" style="left:352.6px;top:718.0px;color:#f4f4f4;font-size:20px;letter-spacing:1.2px"><span style="position:relative;top:-2px">电平:</span></div>
<div class="dj" style="left:414.0px;top:718.0px;color:#f4f4f4;font-size:20px;letter-spacing:1.2px">1 V</div>
<div class="dj" style="left:535.0px;top:718.0px;color:#f4f4f4;font-size:20px;letter-spacing:1.2px"><span style="position:relative;top:-2px">偏置:</span></div>
<div class="dj" style="left:596.5px;top:718.0px;color:#f4f4f4;font-size:20px;letter-spacing:1.2px">0 V</div>
<div class="dj" style="left:717.5px;top:718.0px;color:#f4f4f4;font-size:20px;letter-spacing:1.2px">ΔT : 8.61 s</div>
<div class="dj" style="left:943px;top:718px;width:300px;text-align:right;color:#f4f4f4;font-size:20px;letter-spacing:1.2px"><span style="position:relative;top:-2px">终点:</span>&nbsp; 57kHz</div>
<div class="abs" style="left:0;top:741px;width:1252px;height:3px;background:#9c9c9c"></div>
<div class="dj" style="left:23.6px;top:746.3px;color:#f4f4f4;font-size:21px;letter-spacing:0.9px">Ct</div>
<div class="dj" style="left:93.6px;top:746.3px;color:#f4f4f4;font-size:21px">=</div>
<div class="dj" style="left:122.2px;top:746.3px;color:#f4f4f4;font-size:21px;letter-spacing:1.15px">3.94900nF</div>
<div class="dj" style="left:269.6px;top:746.3px;color:#f4f4f4;font-size:21px;letter-spacing:0.9px">Dt</div>
<div class="dj" style="left:339.6px;top:746.3px;color:#f4f4f4;font-size:21px">=</div>
<div class="dj" style="left:368.2px;top:746.3px;color:#f4f4f4;font-size:21px;letter-spacing:1.15px">0.00326</div>
<div class="dj" style="left:515.6px;top:746.3px;color:#f4f4f4;font-size:21px;letter-spacing:0.9px">Fs</div>
<div class="dj" style="left:585.6px;top:746.3px;color:#f4f4f4;font-size:21px">=</div>
<div class="dj" style="left:614.2px;top:746.3px;color:#f4f4f4;font-size:21px;letter-spacing:1.15px">52.4937kHz</div>
<div class="dj" style="left:761.6px;top:746.3px;color:#f4f4f4;font-size:21px;letter-spacing:0.9px">Fp</div>
<div class="dj" style="left:831.6px;top:746.3px;color:#f4f4f4;font-size:21px">=</div>
<div class="dj" style="left:860.2px;top:746.3px;color:#f4f4f4;font-size:21px;letter-spacing:1.15px">55.0487kHz</div>
<div class="dj" style="left:1007.6px;top:746.3px;color:#f4f4f4;font-size:21px;letter-spacing:0.9px">Fp-Fs</div>
<div class="dj" style="left:1077.6px;top:746.3px;color:#f4f4f4;font-size:21px">=</div>
<div class="dj" style="left:1106.2px;top:746.3px;color:#f4f4f4;font-size:21px;letter-spacing:1.15px">2.55500kHz</div>
<div class="dj" style="left:23.6px;top:772.4px;color:#f4f4f4;font-size:21px;letter-spacing:0.9px">Zmin</div>
<div class="dj" style="left:93.6px;top:772.4px;color:#f4f4f4;font-size:21px">=</div>
<div class="dj" style="left:122.2px;top:772.4px;color:#f4f4f4;font-size:21px;letter-spacing:1.15px">18.7903 Ω</div>
<div class="dj" style="left:269.6px;top:772.4px;color:#f4f4f4;font-size:21px;letter-spacing:0.9px">Zmax</div>
<div class="dj" style="left:339.6px;top:772.4px;color:#f4f4f4;font-size:21px">=</div>
<div class="dj" style="left:368.2px;top:772.4px;color:#f4f4f4;font-size:21px;letter-spacing:1.15px">21.3529kΩ</div>
<div class="dj" style="left:515.6px;top:772.4px;color:#f4f4f4;font-size:21px;letter-spacing:0.9px">F1</div>
<div class="dj" style="left:585.6px;top:772.4px;color:#f4f4f4;font-size:21px">=</div>
<div class="dj" style="left:614.2px;top:772.4px;color:#f4f4f4;font-size:21px;letter-spacing:1.15px">52.4192kHz</div>
<div class="dj" style="left:761.6px;top:772.4px;color:#f4f4f4;font-size:21px;letter-spacing:0.9px">F2</div>
<div class="dj" style="left:831.6px;top:772.4px;color:#f4f4f4;font-size:21px">=</div>
<div class="dj" style="left:860.2px;top:772.4px;color:#f4f4f4;font-size:21px;letter-spacing:1.15px">52.5654kHz</div>
<div class="dj" style="left:1007.6px;top:772.4px;color:#f4f4f4;font-size:21px;letter-spacing:0.9px">F2-F1</div>
<div class="dj" style="left:1077.6px;top:772.4px;color:#f4f4f4;font-size:21px">=</div>
<div class="dj" style="left:1106.2px;top:772.4px;color:#f4f4f4;font-size:21px;letter-spacing:1.15px">146.184 Hz</div>
<div class="dj" style="left:23.6px;top:798.5px;color:#f4f4f4;font-size:21px;letter-spacing:0.9px">Gmax</div>
<div class="dj" style="left:93.6px;top:798.5px;color:#f4f4f4;font-size:21px">=</div>
<div class="dj" style="left:122.2px;top:798.5px;color:#f4f4f4;font-size:21px;letter-spacing:1.15px">53.0874mS</div>
<div class="dj" style="left:269.6px;top:798.5px;color:#f4f4f4;font-size:21px;letter-spacing:0.9px">C0</div>
<div class="dj" style="left:339.6px;top:798.5px;color:#f4f4f4;font-size:21px">=</div>
<div class="dj" style="left:368.2px;top:798.5px;color:#f4f4f4;font-size:21px;letter-spacing:1.15px">3.50217nF</div>
<div class="dj" style="left:515.6px;top:798.5px;color:#f4f4f4;font-size:21px;letter-spacing:0.9px">C1</div>
<div class="dj" style="left:585.6px;top:798.5px;color:#f4f4f4;font-size:21px">=</div>
<div class="dj" style="left:614.2px;top:798.5px;color:#f4f4f4;font-size:21px;letter-spacing:1.15px">446.827pF</div>
<div class="dj" style="left:761.6px;top:798.5px;color:#f4f4f4;font-size:21px;letter-spacing:0.9px">R1</div>
<div class="dj" style="left:831.6px;top:798.5px;color:#f4f4f4;font-size:21px">=</div>
<div class="dj" style="left:860.2px;top:798.5px;color:#f4f4f4;font-size:21px;letter-spacing:1.15px">18.8958 Ω</div>
<div class="dj" style="left:1007.6px;top:798.5px;color:#f4f4f4;font-size:21px;letter-spacing:0.9px">L</div>
<div class="dj" style="left:1077.6px;top:798.5px;color:#f4f4f4;font-size:21px">=</div>
<div class="dj" style="left:1106.2px;top:798.5px;color:#f4f4f4;font-size:21px;letter-spacing:1.15px">20.5724mH</div>
<div class="dj" style="left:23.6px;top:824.6px;color:#f4f4f4;font-size:21px;letter-spacing:0.9px">Kp</div>
<div class="dj" style="left:93.6px;top:824.6px;color:#f4f4f4;font-size:21px">=</div>
<div class="dj" style="left:122.2px;top:824.6px;color:#f4f4f4;font-size:21px;letter-spacing:1.15px">301.119m</div>
<div class="dj" style="left:269.6px;top:824.6px;color:#f4f4f4;font-size:21px;letter-spacing:0.9px">Keff</div>
<div class="dj" style="left:339.6px;top:824.6px;color:#f4f4f4;font-size:21px">=</div>
<div class="dj" style="left:368.2px;top:824.6px;color:#f4f4f4;font-size:21px;letter-spacing:1.15px">301.119m</div>
<div class="dj" style="left:515.6px;top:824.6px;color:#f4f4f4;font-size:21px;letter-spacing:0.9px">Kt</div>
<div class="dj" style="left:585.6px;top:824.6px;color:#f4f4f4;font-size:21px">=</div>
<div class="dj" style="left:614.2px;top:824.6px;color:#f4f4f4;font-size:21px;letter-spacing:1.15px">105.895m</div>
<div class="dj" style="left:761.6px;top:824.6px;color:#f4f4f4;font-size:21px;letter-spacing:0.9px">K31</div>
<div class="dj" style="left:831.6px;top:824.6px;color:#f4f4f4;font-size:21px">=</div>
<div class="dj" style="left:860.2px;top:824.6px;color:#f4f4f4;font-size:21px;letter-spacing:1.15px">335.288m</div>
<div class="dj" style="left:1007.6px;top:824.6px;color:#f4f4f4;font-size:21px;letter-spacing:0.9px">K33</div>
<div class="dj" style="left:1077.6px;top:824.6px;color:#f4f4f4;font-size:21px">=</div>
<div class="dj" style="left:1106.2px;top:824.6px;color:#f4f4f4;font-size:21px;letter-spacing:1.15px">330.819m</div>
<div class="dj" style="left:23.6px;top:850.7px;color:#f4f4f4;font-size:21px;letter-spacing:0.9px">Qm</div>
<div class="dj" style="left:93.6px;top:850.7px;color:#f4f4f4;font-size:21px">=</div>
<div class="dj" style="left:122.2px;top:850.7px;color:#f4f4f4;font-size:21px;letter-spacing:1.15px">450.626</div>
<div class="dj" style="left:269.6px;top:850.7px;color:#f4f4f4;font-size:21px;letter-spacing:0.9px">ε</div>
<div class="dj" style="left:339.6px;top:850.7px;color:#f4f4f4;font-size:21px">=</div>
<div class="dj" style="left:368.2px;top:850.7px;color:#f4f4f4;font-size:21px;letter-spacing:1.15px">3.94900n</div>
<div class="dj" style="left:515.6px;top:850.7px;color:#f4f4f4;font-size:21px;letter-spacing:0.9px">εr</div>
<div class="dj" style="left:585.6px;top:850.7px;color:#f4f4f4;font-size:21px">=</div>
<div class="dj" style="left:614.2px;top:850.7px;color:#f4f4f4;font-size:21px;letter-spacing:1.15px">446.013</div>
<!--/PC_CHART-->
  <div class="side">
    <div class="abs" style="left:3px;top:1px;width:204px;height:44px;background:#6c6e6b;border:2px solid #5a5c5a;border-bottom-color:#4a4c4a;border-radius:9px 9px 2px 2px;color:#fff;font-size:22px;text-align:center;line-height:40px;letter-spacing:2px">曲线设置</div>
    <div class="sbtn" style="left:3px;top:52px;width:204px;height:89px"><div style="position:absolute;left:0;top:14px;width:100%;font-size:22px;letter-spacing:1px">触发</div><div class="subbox" style="left:22px;top:55px;width:159px;height:29px;font-size:22px;line-height:25px;letter-spacing:1px">单次</div></div>
    <div class="sbtn" style="left:3px;top:147px;width:204px;height:89px"><div style="position:absolute;left:0;top:14px;width:100%;font-size:22px;letter-spacing:1px">标尺</div><div class="subbox" style="left:22px;top:55px;width:159px;height:29px;font-size:22px;line-height:25px;letter-spacing:1px">自动</div></div>
    <div class="sbtn" style="left:3px;top:242px;width:204px;height:89px"><div style="position:absolute;left:0;top:14px;width:100%;font-size:22px;letter-spacing:1px">极值</div><div class="subbox" style="left:22px;top:55px;width:159px;height:29px;font-size:22px;line-height:25px;letter-spacing:1px"><span style="color:#888">关-</span><span style="color:#000">开</span></div></div>
    <div class="sbtn" style="left:3px;top:340px;width:204px;height:89px"><div style="position:absolute;left:0;top:31px;width:100%;font-size:22px;letter-spacing:1px">坐标格式</div><div class="abs" style="left:180px;top:37px;width:0;height:0;border-left:22px solid #000;border-top:8px solid transparent;border-bottom:8px solid transparent"></div></div>
    <div class="sbtn" style="left:3px;top:436px;width:204px;height:89px"><div style="position:absolute;left:0;top:31px;width:100%;font-size:22px;letter-spacing:1px">读取</div><div class="abs" style="left:180px;top:37px;width:0;height:0;border-left:22px solid #000;border-top:8px solid transparent;border-bottom:8px solid transparent"></div></div>
    <div class="sbtn" style="left:3px;top:532px;width:204px;height:89px"><div style="position:absolute;left:0;top:31px;width:100%;font-size:22px;letter-spacing:1px">曲线</div><div class="abs" style="left:180px;top:37px;width:0;height:0;border-left:22px solid #000;border-top:8px solid transparent;border-bottom:8px solid transparent"></div></div>
    <div class="sbtn" style="left:3px;top:628px;width:204px;height:89px"><div style="position:absolute;left:0;top:31px;width:100%;font-size:22px;letter-spacing:1px">保存</div><div class="abs" style="left:180px;top:37px;width:0;height:0;border-left:22px solid #000;border-top:8px solid transparent;border-bottom:8px solid transparent"></div></div>
  </div>
  <div class="stat">
    <div class="abs" style="left:1109px;top:3px;width:94px;height:30px;border:2px solid #777;border-right-color:#eee;border-bottom-color:#eee;font-size:22px;line-height:26px;text-align:center;color:#000">线缆:0m</div>
    <div class="abs" style="left:1207px;top:3px;width:45px;height:30px;border:2px solid #666;border-right-color:#eee;border-bottom-color:#eee;background:#fff"></div><svg class="abs" style="left:1215px;top:7px" width="30.6" height="17.0" viewBox="0 0 36 20"><g stroke="#333" fill="none" stroke-width="2"><circle cx="5" cy="10" r="3.5"/><path d="M8.5 10H29M13 10L19 4H23M15 10L21 16H24"/></g><path d="M28 6L34 10L28 14Z" fill="#333"/><circle cx="25" cy="4" r="2.6" fill="none" stroke="#333" stroke-width="1.8"/><rect x="24" y="13" width="5" height="5" fill="#333"/></svg>
    <div class="abs" style="left:1269px;top:6px;font-size:22px;color:#111;transform:scaleX(0.84);transform-origin:left top">2023/10/07 08:58:21</div>
  </div>
</div>
<!--OVERLAY-->
<svg class="abs" style="left:0;top:0;z-index:50;pointer-events:none" width="2328" height="1652" viewBox="0 0 2328 1652">
<path d="M1128.7 221.8 L1126.9 215.7 L1127.8 209.1 L1126.0 205.2 L1120.8 193.4 L1118.2 192.1 L1115.1 193.8 L1114.2 194.5 L1111.2 192.1 L1107.3 194.0 L1103.8 192.5 L1100.7 194.2 L1099.8 196.9 L1094.6 184.2 L1091.1 181.4 L1087.6 184.2 L1088.0 188.1 L1099.8 213.5 L1098.5 213.9 L1088.9 208.0 L1085.4 208.7 L1084.5 211.7 L1088.0 215.2 L1100.3 222.6 L1109.0 224.8 L1111.2 229.2 M1079.3 180.1 L1077.1 192.5 M1072.5 185.9 L1077.1 192.5 L1083.7 187.7 M1074.5 209.1 L1076.7 196.9 M1070.1 201.7 L1076.7 196.9 L1081.5 203.0" stroke="#ff0000" stroke-width="1.7" fill="none" stroke-linejoin="round" stroke-linecap="round"/>
<path d="M577.8 629.2 L576.0 623.1 L576.9 616.5 L575.1 612.6 L569.9 600.8 L567.3 599.5 L564.2 601.2 L563.3 601.9 L560.3 599.5 L556.4 601.4 L552.9 599.9 L549.8 601.6 L548.9 604.3 L543.7 591.6 L540.2 588.8 L536.7 591.6 L537.1 595.5 L548.9 620.9 L547.6 621.3 L538.0 615.4 L534.5 616.1 L533.6 619.1 L537.1 622.6 L549.4 630.0 L558.1 632.2 L560.3 636.6 M528.4 587.5 L526.2 599.9 M521.6 593.3 L526.2 599.9 L532.8 595.1 M523.6 616.5 L525.8 604.3 M519.2 609.1 L525.8 604.3 L530.6 610.4" stroke="#ff0000" stroke-width="1.7" fill="none" stroke-linejoin="round" stroke-linecap="round"/>
<path d="M1557.3 684.2 L1555.5 678.1 L1556.4 671.5 L1554.6 667.6 L1549.4 655.8 L1546.8 654.5 L1543.7 656.2 L1542.8 656.9 L1539.8 654.5 L1535.9 656.4 L1532.4 654.9 L1529.3 656.6 L1528.4 659.3 L1523.2 646.6 L1519.7 643.8 L1516.2 646.6 L1516.6 650.5 L1528.4 675.9 L1527.1 676.3 L1517.5 670.4 L1514.0 671.1 L1513.1 674.1 L1516.6 677.6 L1528.9 685.0 L1537.6 687.2 L1539.8 691.6 M1507.9 642.5 L1505.7 654.9 M1501.1 648.3 L1505.7 654.9 L1512.3 650.1 M1503.1 671.5 L1505.3 659.3 M1498.7 664.1 L1505.3 659.3 L1510.1 665.4" stroke="#ff0000" stroke-width="1.7" fill="none" stroke-linejoin="round" stroke-linecap="round"/>
<path d="M1131.3 179.4 H1188 V183.6 H1131.3 Z M1186.8 167 L1215.6 181.5 L1186.8 195.4 Z" fill="#ff0000"/>
<path d="M1641 688.5 C1708 765 1700 905 1588 957" stroke="#ff0000" stroke-width="4.8" fill="none" stroke-linejoin="round"/>
<path d="M1620.6 670.3 L1652 678.7 L1632 700.7 Z M1561 962.3 L1585 941.4 L1593.4 968.6 Z" fill="#ff0000"/>
</svg>
<!--/OVERLAY-->
</body></html>
